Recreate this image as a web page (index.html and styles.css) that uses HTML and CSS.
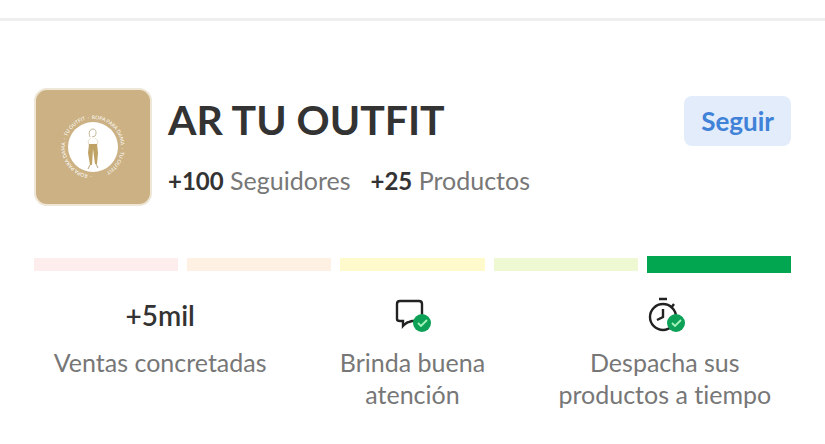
FILE: index.html
```html
<!DOCTYPE html>
<html lang="es">
<head>
    <meta charset="UTF-8">
    <meta name="viewport" content="width=device-width, initial-scale=1.0">
    <title>AR TU OUTFIT</title>
    <link rel="stylesheet" href="styles.css">
</head>
<body>

<section class="seller">
    <header class="seller-header">
        <svg class="seller-logo" viewBox="0 0 114 114" aria-hidden="true">
            <path id="ring" d="M57 85 a28 28 0 1 1 0 -56 a28 28 0 1 1 0 56" fill="none"/>
            <circle cx="57" cy="57" r="25" fill="#fff"/>
            <text class="ring-text"><textPath href="#ring">&nbsp;·&nbsp; ROPA PARA DAMA &nbsp;·&nbsp; TU OUTFIT &nbsp;·&nbsp; ROPA PARA DAMA &nbsp;·&nbsp; TU OUTFIT</textPath></text>
            <path d="M54 47c-2-5 0-8 3-8s4 4 2 7l-3 1" fill="none" stroke="#b7a47c" stroke-width=".8"/>
            <path d="M55 48l-3 3 1 4M59 48l3 3-1 4" fill="none" stroke="#ddd0b3" stroke-width=".7"/>
            <path d="M53 54h8l1 9-1 11h-2l-2-15-1 16h-2l-2-12z" fill="#bfa366"/>
            <path d="M54 75l-2 4M60 74l2 4" stroke="#b5a27c" stroke-width="1"/>
        </svg>

        <div class="seller-info">
            <h1>AR TU OUTFIT</h1>
            <p class="seller-counts">
                <span><strong>+100</strong> Seguidores</span>
                <span><strong>+25</strong> Productos</span>
            </p>
        </div>

        <button type="button" class="follow">Seguir</button>
    </header>

    <div class="levels">
        <div class="level level-1"></div>
        <div class="level level-2"></div>
        <div class="level level-3"></div>
        <div class="level level-4"></div>
        <div class="level level-5 active"></div>
    </div>

    <div class="stats">
        <div class="stat">
            <div class="stat-value">+5mil</div>
            <p>Ventas concretadas</p>
        </div>
        <div class="stat">
            <div class="stat-value">
                <svg class="stat-icon" viewBox="0 0 40 40" fill="none" aria-hidden="true">
                    <path d="M17 27q-2 0-6 4v-5H8q-3 0-3-2V9q0-3 3-3h19q3 0 3 3v17H20z" stroke="#222" stroke-width="2.4"/>
                    <circle cx="30" cy="28" r="9" fill="#0ca157"/>
                    <path d="M26 28l3 3 6-6" stroke="#a5f3b9" stroke-width="1.8"/>
                </svg>
            </div>
            <p>Brinda buena<br>atención</p>
        </div>
        <div class="stat">
            <div class="stat-value">
                <svg class="stat-icon" viewBox="0 0 40 40" fill="none" aria-hidden="true">
                    <circle cx="18" cy="22" r="13" stroke="#222" stroke-width="2.4"/>
                    <path d="M14 4h8M26 13l3-4M18 14v8l-6 3" stroke="#222" stroke-width="2.4"/>
                    <circle cx="31" cy="28" r="9" fill="#0ca157"/>
                    <path d="M27 28l3 3 6-6" stroke="#a5f3b9" stroke-width="1.8"/>
                </svg>
            </div>
            <p>Despacha sus<br>productos a tiempo</p>
        </div>
    </div>
</section>

</body>
</html>
```
FILE: styles.css
```css
body {
    margin: 0;
    padding-top: 18px;
    background-color: #fff;
    color: #333;
    font-family: Lato, "Open Sans", sans-serif;
    font-size: 25px;
    font-variant-ligatures: none;
}
h1, p {
    margin: 0;
}
.seller {
    border-top: 3px solid #eee;
    padding: 67px 34px 32px;
}
.seller-header {
    display: flex;
    align-items: flex-start;
}
.seller-logo {
    flex: none;
    width: 114px;
    height: 114px;
    border: 2px solid #eee6d6;
    border-radius: 13px;
    background-color: #cbb183;
}
.ring-text {
    font-size: 5px;
    fill: #fff;
}
.seller-info {
    flex: 1;
    padding-left: 16px;
}
h1 {
    padding-top: 8px;
    font-size: 41px;
    font-weight: 700;
    line-height: 48px;
}
.seller-counts {
    display: flex;
    gap: 20px;
    padding-top: 20px;
    line-height: 32px;
    color: #777;
}
.seller-counts strong {
    color: #333;
    font-size: 24px;
}
.follow {
    margin-top: 8px;
    padding: 0 17px;
    border: none;
    border-radius: 8px;
    background-color: #e3ecfb;
    color: #3f82d8;
    font-family: inherit;
    font-size: 26px;
    font-weight: 700;
    line-height: 50px;
    cursor: pointer;
}
.levels {
    display: flex;
    align-items: center;
    gap: 9px;
    height: 17px;
    margin-top: 50px;
}
.level {
    flex: 1;
    height: 13px;
}
.level.active {
    height: 17px;
}
.level-1 { background-color: #feeded; }
.level-2 { background-color: #fef0e2; }
.level-3 { background-color: #fffacb; }
.level-4 { background-color: #eef8d2; }
.level-5 { background-color: #02a650; }
.stats {
    display: grid;
    grid-template-columns: repeat(3, 1fr);
    margin-top: 22px;
    text-align: center;
    line-height: 32px;
    color: #777;
}
.stat-value {
    display: flex;
    justify-content: center;
    align-items: center;
    height: 40px;
    margin-bottom: 11px;
    color: #333;
    font-size: 28px;
    font-weight: 600;
}
.stat-icon {
    width: 40px;
    height: 40px;
}
```
